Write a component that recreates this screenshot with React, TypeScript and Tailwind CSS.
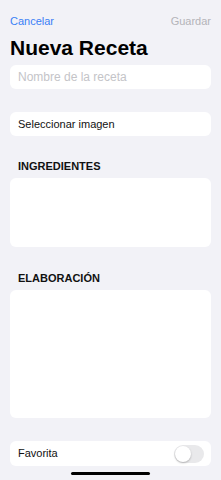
export default function App() {
  return (
    <div
      className="w-[221px] h-[480px] bg-[#f2f2f7] flex flex-col px-[10px] overflow-hidden"
      style={{ fontFamily: '"Liberation Sans", Arial, sans-serif' }}
    >
      {/* Nav bar */}
      <div className="pt-[14px] h-[28px] flex items-start justify-between text-[11px] leading-[14px]">
        <span className="text-[#3a80f6]">Cancelar</span>
        <span className="text-[#b4b4b9]">Guardar</span>
      </div>

      <h1 className="mt-[7px] text-[21px] leading-[25px] font-bold text-black">Nueva Receta</h1>

      {/* Name field */}
      <div className="mt-[5px] h-[24px] bg-white rounded-[6px] flex items-center px-[8px]">
        <span className="text-[12px] text-[#c4c4c8]">Nombre de la receta</span>
      </div>

      {/* Image picker */}
      <div className="mt-[23px] h-[24px] bg-white rounded-[6px] flex items-center px-[8px]">
        <span className="text-[11px] text-[#111]">Seleccionar imagen</span>
      </div>

      {/* Ingredientes */}
      <div className="mt-[24px] px-[8px] text-[11px] leading-[13px] font-bold text-[#111]">INGREDIENTES</div>
      <div className="mt-[5px] h-[69px] bg-white rounded-[6px]" />

      {/* Elaboración */}
      <div className="mt-[25px] px-[8px] text-[11px] leading-[13px] font-bold text-[#111]">ELABORACIÓN</div>
      <div className="mt-[5px] h-[128px] bg-white rounded-[6px]" />

      {/* Favorita */}
      <div className="mt-[23px] h-[25px] bg-white rounded-[6px] flex items-center justify-between pl-[8px] pr-[7px]">
        <span className="text-[11px] text-[#111]">Favorita</span>
        <div className="w-[30px] h-[18px] rounded-full bg-[#e9e9eb] p-[1px] flex items-center">
          <div className="w-[16px] h-[16px] rounded-full bg-white shadow-[0_1px_2px_rgba(0,0,0,0.25)]" />
        </div>
      </div>

      {/* Home indicator */}
      <div className="mt-[6px] flex justify-center">
        <div className="w-[79px] h-[3px] rounded-full bg-black" />
      </div>
    </div>
  );
}
